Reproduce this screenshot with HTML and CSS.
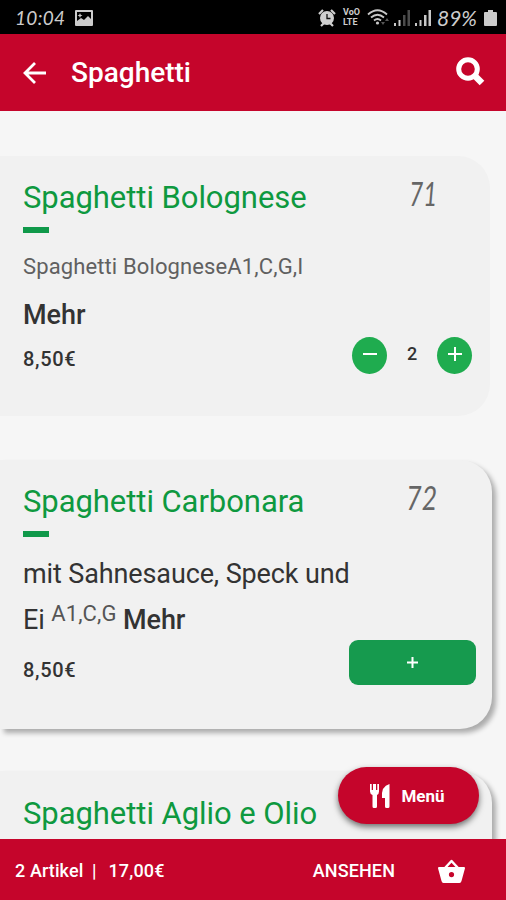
FILE: index.html
```html
<!DOCTYPE html>
<html lang="de">
<head>
<meta charset="utf-8">
<title>Spaghetti</title>
<link rel="stylesheet" href="styles.css">
</head>
<body>
<div class="screen">
  <div class="status">
    <span class="clock">10:04</span>
    <svg class="picture" width="18" height="16" viewBox="0 0 18 16"><path fill="#ccc" fill-rule="evenodd" d="M1 0h16a1 1 0 0 1 1 1v14a1 1 0 0 1-1 1H1a1 1 0 0 1-1-1V1a1 1 0 0 1 1-1zm1 2v9l4-3 3 2 4-4 3 3V2zM5 3l.7 1.800L7.500 5.500l-1.800.7L5 8l-.7-1.800L2.500 5.500l1.800-.7z"/></svg>
    <div class="indicators">
      <svg width="18" height="18" viewBox="0 0 18 18" fill="none" stroke="#d0d0d0"><circle cx="9" cy="9" r="6" fill="#d0d0d0" stroke-width="2"/><path stroke-width="2.200" d="M1 5l4-4M17 5l-4-4M3 17l3-3M15 17l-3-3"/><path stroke="#111" stroke-width="1.300" d="M9 5v4.500h3.500"/></svg>
      <span class="volte"><span>VoO</span><span>LTE</span></span>
      <svg class="wifi" width="23" height="17" viewBox="0 0 23 17" fill="none" stroke="#c8c8c8" stroke-width="1.800"><path d="M1 5.500Q10.500-3 20 5.500M4 8.500q6.500-5.500 13 0M7 11.500q3.500-3 7 0"/><circle cx="10.500" cy="14" r="1.600" fill="#c8c8c8" stroke="none"/><path fill="#555" stroke="none" d="M14 13l2 3 2-3zM18 12l2-3 2 3z"/></svg>
      <svg class="bars" width="16" height="17" viewBox="0 0 16 17"><path fill="#c8c8c8" d="M0 14h2v3H0zM4.500 11h2v6h-2z"/><path fill="#4c4c4c" d="M9 6h2.500v11H9zM13.500 1H16v16h-2.500z"/></svg>
      <svg class="bars second" width="16" height="17" viewBox="0 0 16 17"><path fill="#c8c8c8" d="M0 14h2v3H0zM4.500 11h2v6h-2zM9 6h2.500v11H9zM13.500 1H16v16h-2.500z"/></svg>
      <span class="percent">89%</span>
      <svg width="13" height="18" viewBox="0 0 13 18"><path fill="#ccc" d="M4 1h5v2h3a1 1 0 0 1 1 1v12a1 1 0 0 1-1 1H1a1 1 0 0 1-1-1V4a1 1 0 0 1 1-1h3z"/></svg>
    </div>
  </div>

  <header class="appbar">
    <svg width="24" height="24" viewBox="0 0 24 24" fill="none" stroke="#fff" stroke-width="2.800"><path d="M12 2L2 12l10 10M2 12h21"/></svg>
    <h1>Spaghetti</h1>
    <svg class="search" width="29" height="29" viewBox="0 0 29 29" fill="none" stroke="#fff"><circle cx="12" cy="12" r="9.300" stroke-width="5"/><path stroke-width="6.500" d="M18.500 18.500l7.500 7.500"/></svg>
  </header>

  <main class="list">
    <article class="card first">
      <div class="heading"><h2>Spaghetti Bolognese</h2><span class="number one">71</span></div>
      <div class="rule"></div>
      <p class="ingredients">Spaghetti BologneseA1,C,G,I</p>
      <p class="more">Mehr</p>
      <div class="buy">
        <span class="price">8,50€</span>
        <div class="stepper">
          <button class="round"><svg width="14" height="14" viewBox="0 0 14 14"><path fill="#fff" d="M0 5h14v2H0z"/></svg></button>
          <span class="count">2</span>
          <button class="round"><svg width="14" height="14" viewBox="0 0 14 14"><path fill="#fff" d="M0 5h6V-1h2v6h6v2H8v6H6V7H0z"/></svg></button>
        </div>
      </div>
    </article>

    <article class="card raised">
      <div class="heading"><h2>Spaghetti Carbonara</h2><span class="number two">72</span></div>
      <div class="rule"></div>
      <p class="description">mit Sahnesauce, Speck und<br>Ei <sup>A1,C,G</sup> <b>Mehr</b></p>
      <div class="buy">
        <span class="price">8,50€</span>
        <button class="add"><svg width="11" height="11" viewBox="0 0 11 11"><path fill="#fff" d="M0 4.500h4.500V0h2v4.500H11v2H6.500V11h-2V6.500H0z"/></svg></button>
      </div>
    </article>

    <article class="card raised last">
      <div class="heading"><h2>Spaghetti Aglio e Olio</h2></div>
    </article>
  </main>

  <button class="menu">
    <svg width="20" height="24" viewBox="0 0 20 24"><path fill="#fff" d="M0 0h1.700v6h1.300V0h3v6h1.300V0H9v7.500Q9 10 7 11v11.500Q7 24 5.500 24H4Q2.500 24 2.500 22.500V11Q0 10 0 7.500zM19.500 0v22.500Q19.500 24 18 24h-1.500Q15 24 15 22.500V14H12Q11 2 19.500 0z"/></svg>
    <span>Menü</span>
  </button>

  <footer class="cart">
    <span class="items">2 Artikel</span><span class="sep">|</span><span class="total">17,00€</span>
    <span class="view">ANSEHEN</span>
    <svg width="27" height="24" viewBox="0 0 27 24"><path fill="none" stroke="#fff" stroke-width="2.500" stroke-linejoin="round" d="M7 9l6.500-7L20 9"/><path fill="#fff" fill-rule="evenodd" d="M1 8h25q1 0 1 1.300L23.500 22q-.5 2-2 2h-16q-1.500 0-2-2L0 9.300Q0 8 1 8zm12.500 5a2.600 2.600 0 1 0 0 5.200a2.600 2.600 0 0 0 0-5.200z"/></svg>
  </footer>
</div>
</body>
</html>
```
FILE: styles.css
```css
* { box-sizing: border-box; }
body { margin: 0; font-family: Roboto, sans-serif; }
h1, h2, p { margin: 0; font-weight: 400; white-space: nowrap; }
button { border: 0; padding: 0; font: inherit; display: flex; align-items: center; justify-content: center; }
svg { display: block; flex: none; overflow: visible; }

.screen { width: 506px; height: 900px; display: flex; flex-direction: column; overflow: hidden; position: relative; background: #f6f6f6; }

.status { height: 34px; flex: none; background: #000; color: #ccc; display: flex; align-items: center; padding: 1px 9px 0 15px; }
.clock { width: 60px; font: italic 19px/20px Lato, sans-serif; letter-spacing: .3px; }
.indicators { margin-left: auto; display: flex; align-items: center; }
.volte { display: flex; flex-direction: column; width: 18px; margin-left: 7px; font-size: 9px; line-height: 11px; font-weight: 700; }
.volte span + span { margin-top: -1px; }
.wifi { margin-left: 6px; }
.bars { margin-left: 4px; }
.second { margin-left: 5px; }
.percent { width: 43px; margin: 0 4px 0 6px; font: italic 21px/20px Lato, sans-serif; white-space: nowrap; }

.appbar { height: 77px; flex: none; background: #c5052b; color: #fff; display: flex; align-items: center; padding: 0 21px 0 23px; }
.appbar svg { margin-top: 1px; }
.appbar h1 { margin-left: 24px; font-size: 28px; font-weight: 500; line-height: 34px; padding-top: 1px; }
.appbar .search { margin-left: auto; margin-top: -3px; }

.list { flex: 1; min-height: 0; overflow: hidden; padding-top: 45px; display: flex; flex-direction: column; gap: 44px; }
.card { flex: none; background: #f1f1f1; width: 492px; padding: 23px 16px 0 23px; border-radius: 0 32px 32px 0; color: #333; }
.first { width: 490px; height: 260px; padding-right: 18px; }
.raised { height: 269px; box-shadow: 4px 4px 5px rgba(0, 0, 0, .3); }
.last { margin-top: -2px; padding-top: 24px; }
.heading { display: flex; height: 38px; align-items: center; justify-content: space-between; }
.heading h2 { color: #0e993f; font-size: 31px; line-height: 38px; letter-spacing: -.06px; }
.number { font: italic 400 32px/38px Lato, sans-serif; color: #666; transform: scaleX(.75); transform-origin: right; margin-top: -8px; }
.one { margin-right: 35px; }
.two { margin-right: 39px; transform: scaleX(.83); }
.rule { width: 26px; height: 6px; margin-top: 10px; background: #10994a; }
.ingredients { margin-top: 20px; font-size: 22px; line-height: 28px; letter-spacing: .12px; color: #606060; }
.more { margin-top: 18px; font-size: 27px; line-height: 32px; font-weight: 500; }
.buy { display: flex; justify-content: space-between; }
.price { font-size: 20px; line-height: 24px; font-weight: 500; letter-spacing: .7px; }
.first .price { margin-top: 16px; }
.stepper { display: flex; align-items: center; margin-top: 5px; height: 38px; }
.round { width: 35px; height: 37px; border-radius: 50%; background: #1fac4f; }
.count { width: 50px; text-align: center; font-size: 18px; line-height: 24px; font-weight: 500; margin-top: -2px; }
.description { margin-top: 14px; font-size: 27px; line-height: 46px; letter-spacing: -.12px; }
.description sup { font-size: 22px; line-height: 0; vertical-align: 8px; letter-spacing: .1px; color: #555; }
.description b { font-weight: 500; }
.raised .price { margin-top: 15px; }
.add { width: 127px; height: 45px; margin-top: -3px; border-radius: 9px; background: #169a4e; }

.menu { position: absolute; left: 338px; top: 767px; width: 141px; height: 57px; padding-right: 2px; border-radius: 29px; background: #c5052b; color: #fff; box-shadow: 0 3px 6px rgba(0, 0, 0, .55); font-size: 17px; font-weight: 700; gap: 11px; }

.cart { height: 61px; flex: none; background: #c5052b; color: #fff; display: flex; align-items: center; padding: 2px 41px 0 15px; font-size: 18px; font-weight: 500; white-space: nowrap; }
.items { width: 77px; letter-spacing: .1px; }
.total { margin-left: 12px; letter-spacing: .15px; }
.view { margin-left: auto; margin-right: 43px; letter-spacing: .1px; }
```
